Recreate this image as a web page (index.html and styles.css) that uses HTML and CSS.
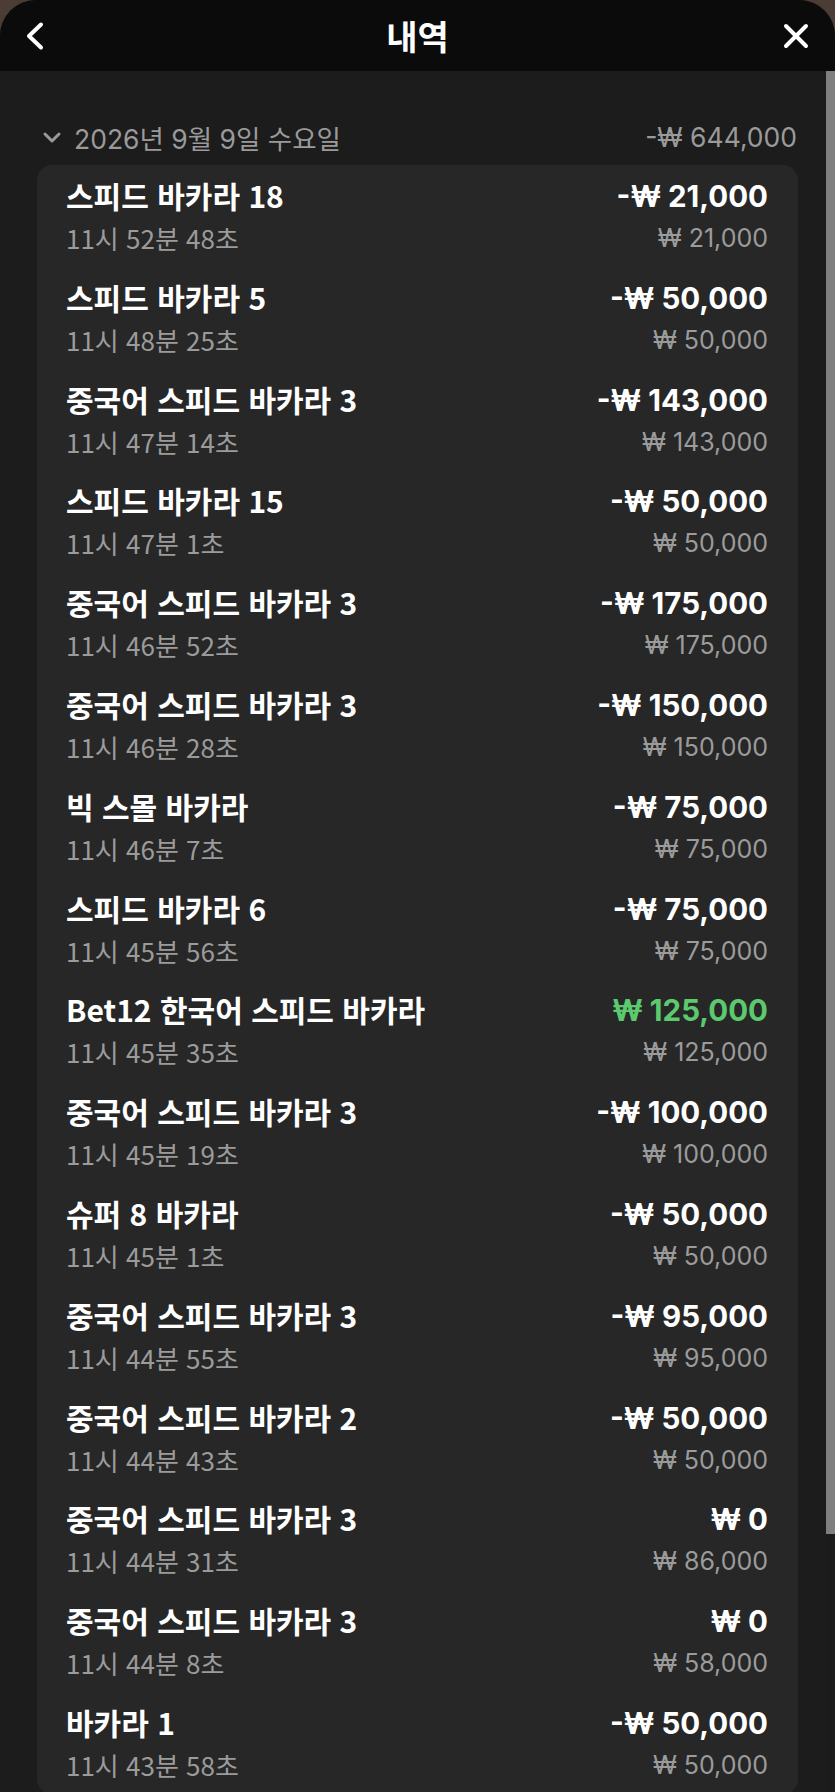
FILE: index.html
```html
<!DOCTYPE html>
<html lang="ko">
<head>
    <meta charset="UTF-8">
    <meta name="viewport" content="width=device-width, initial-scale=1.0">
    <title>내역</title>
    <link rel="stylesheet" href="styles.css">
</head>
<body>
    <div class="sheet">
        <header class="topbar">
            <button class="icon-btn back" aria-label="뒤로">
                <svg width="20" height="30" viewBox="0 0 20 30"><path d="M17 3.5 L5 15 L17 26.5" fill="none" stroke="#fff" stroke-width="4" stroke-linecap="round" stroke-linejoin="round"/></svg>
            </button>
            <h1>내역</h1>
            <button class="icon-btn close" aria-label="닫기">
                <svg width="26" height="26" viewBox="0 0 26 26"><path d="M3 3 L23 23 M23 3 L3 23" fill="none" stroke="#fff" stroke-width="4" stroke-linecap="round"/></svg>
            </button>
        </header>

        <div class="main">
            <div class="scroll">
                <div class="day-head">
                    <svg class="chev" width="20" height="14" viewBox="0 0 20 14"><path d="M3 4 L10 11 L17 4" fill="none" stroke="#9a9a9a" stroke-width="3" stroke-linecap="round" stroke-linejoin="round"/></svg>
                    <span class="day-date">2026년 9월 9일 수요일</span>
                    <span class="day-total">-₩ 644,000</span>
                </div>

                <ul class="tx-list">
                    <li class="tx">
                        <div class="tx-left"><div class="tx-name">스피드 바카라 18</div><div class="tx-time">11시 52분 48초</div></div>
                        <div class="tx-right"><div class="tx-amount">-₩ 21,000</div><div class="tx-bet">₩ 21,000</div></div>
                    </li>
                    <li class="tx">
                        <div class="tx-left"><div class="tx-name">스피드 바카라 5</div><div class="tx-time">11시 48분 25초</div></div>
                        <div class="tx-right"><div class="tx-amount">-₩ 50,000</div><div class="tx-bet">₩ 50,000</div></div>
                    </li>
                    <li class="tx">
                        <div class="tx-left"><div class="tx-name">중국어 스피드 바카라 3</div><div class="tx-time">11시 47분 14초</div></div>
                        <div class="tx-right"><div class="tx-amount">-₩ 143,000</div><div class="tx-bet">₩ 143,000</div></div>
                    </li>
                    <li class="tx">
                        <div class="tx-left"><div class="tx-name">스피드 바카라 15</div><div class="tx-time">11시 47분 1초</div></div>
                        <div class="tx-right"><div class="tx-amount">-₩ 50,000</div><div class="tx-bet">₩ 50,000</div></div>
                    </li>
                    <li class="tx">
                        <div class="tx-left"><div class="tx-name">중국어 스피드 바카라 3</div><div class="tx-time">11시 46분 52초</div></div>
                        <div class="tx-right"><div class="tx-amount">-₩ 175,000</div><div class="tx-bet">₩ 175,000</div></div>
                    </li>
                    <li class="tx">
                        <div class="tx-left"><div class="tx-name">중국어 스피드 바카라 3</div><div class="tx-time">11시 46분 28초</div></div>
                        <div class="tx-right"><div class="tx-amount">-₩ 150,000</div><div class="tx-bet">₩ 150,000</div></div>
                    </li>
                    <li class="tx">
                        <div class="tx-left"><div class="tx-name">빅 스몰 바카라</div><div class="tx-time">11시 46분 7초</div></div>
                        <div class="tx-right"><div class="tx-amount">-₩ 75,000</div><div class="tx-bet">₩ 75,000</div></div>
                    </li>
                    <li class="tx">
                        <div class="tx-left"><div class="tx-name">스피드 바카라 6</div><div class="tx-time">11시 45분 56초</div></div>
                        <div class="tx-right"><div class="tx-amount">-₩ 75,000</div><div class="tx-bet">₩ 75,000</div></div>
                    </li>
                    <li class="tx">
                        <div class="tx-left"><div class="tx-name">Bet12 한국어 스피드 바카라</div><div class="tx-time">11시 45분 35초</div></div>
                        <div class="tx-right"><div class="tx-amount win">₩ 125,000</div><div class="tx-bet">₩ 125,000</div></div>
                    </li>
                    <li class="tx">
                        <div class="tx-left"><div class="tx-name">중국어 스피드 바카라 3</div><div class="tx-time">11시 45분 19초</div></div>
                        <div class="tx-right"><div class="tx-amount">-₩ 100,000</div><div class="tx-bet">₩ 100,000</div></div>
                    </li>
                    <li class="tx">
                        <div class="tx-left"><div class="tx-name">슈퍼 8 바카라</div><div class="tx-time">11시 45분 1초</div></div>
                        <div class="tx-right"><div class="tx-amount">-₩ 50,000</div><div class="tx-bet">₩ 50,000</div></div>
                    </li>
                    <li class="tx">
                        <div class="tx-left"><div class="tx-name">중국어 스피드 바카라 3</div><div class="tx-time">11시 44분 55초</div></div>
                        <div class="tx-right"><div class="tx-amount">-₩ 95,000</div><div class="tx-bet">₩ 95,000</div></div>
                    </li>
                    <li class="tx">
                        <div class="tx-left"><div class="tx-name">중국어 스피드 바카라 2</div><div class="tx-time">11시 44분 43초</div></div>
                        <div class="tx-right"><div class="tx-amount">-₩ 50,000</div><div class="tx-bet">₩ 50,000</div></div>
                    </li>
                    <li class="tx">
                        <div class="tx-left"><div class="tx-name">중국어 스피드 바카라 3</div><div class="tx-time">11시 44분 31초</div></div>
                        <div class="tx-right"><div class="tx-amount">₩ 0</div><div class="tx-bet">₩ 86,000</div></div>
                    </li>
                    <li class="tx">
                        <div class="tx-left"><div class="tx-name">중국어 스피드 바카라 3</div><div class="tx-time">11시 44분 8초</div></div>
                        <div class="tx-right"><div class="tx-amount">₩ 0</div><div class="tx-bet">₩ 58,000</div></div>
                    </li>
                    <li class="tx">
                        <div class="tx-left"><div class="tx-name">바카라 1</div><div class="tx-time">11시 43분 58초</div></div>
                        <div class="tx-right"><div class="tx-amount">-₩ 50,000</div><div class="tx-bet">₩ 50,000</div></div>
                    </li>
                </ul>
            </div>
            <div class="scrollbar"><div class="thumb"></div></div>
        </div>
    </div>
</body>
</html>
```

FILE: styles.css
```css
html, body {
    margin: 0;
    height: 100%;
    overflow: hidden;
}
body {
    background: #4b3d35;
    font-family: "Noto Sans CJK KR", "Noto Sans", sans-serif;
    color: #fff;
}
.sheet {
    height: 1792px;
    border-radius: 36px 36px 0 0;
    overflow: hidden;
    background: #1c1c1c;
    display: flex;
    flex-direction: column;
}
.topbar {
    height: 71px;
    flex: none;
    background: #0b0b0b;
    display: flex;
    align-items: center;
    justify-content: space-between;
    padding: 0 24px;
}
.topbar h1 {
    margin: 0;
    font-size: 34px;
    font-weight: 700;
    line-height: 1;
}
.icon-btn {
    background: none;
    border: none;
    padding: 0;
    width: 30px;
    height: 30px;
    display: flex;
    align-items: center;
    justify-content: center;
    cursor: pointer;
}
.icon-btn.back {
    justify-content: flex-start;
}
.main {
    flex: 1;
    display: flex;
    min-height: 0;
}
.scroll {
    flex: 1;
    padding: 0 28px 0 37px;
}
.scrollbar {
    width: 9px;
    flex: none;
    background: #1b1b1b;
}
.thumb {
    height: 1463px;
    background: #7f7f7f;
}
.day-head {
    height: 56px;
    padding: 38px 1px 0 5px;
    display: flex;
    align-items: center;
    color: #9a9a9a;
    font-size: 26.5px;
    font-family: Inter, "Noto Sans CJK KR", sans-serif;
}
.chev {
    margin-right: 12px;
}
.day-total {
    margin-left: auto;
}
.tx-list {
    list-style: none;
    margin: 0;
    padding: 0 30px 0 29px;
    background: #272727;
    border-radius: 15px;
}
.tx {
    height: 101.8px;
    box-sizing: border-box;
    padding-top: 12px;
    display: flex;
    justify-content: space-between;
}
.tx-name {
    font-size: 30px;
    font-weight: 700;
    line-height: 36px;
}
.tx-time {
    font-size: 26px;
    line-height: 36px;
    margin-top: 7px;
    color: #9b9b9b;
}
.tx-right {
    text-align: right;
    font-family: Inter, "Noto Sans CJK KR", sans-serif;
    padding-top: 1px;
}
.tx-amount {
    font-size: 29.5px;
    font-weight: 700;
    line-height: 36px;
}
.tx-amount.win {
    color: #5cc96e;
}
.tx-bet {
    font-size: 25px;
    line-height: 36px;
    margin-top: 6px;
    color: #9b9b9b;
}
```
